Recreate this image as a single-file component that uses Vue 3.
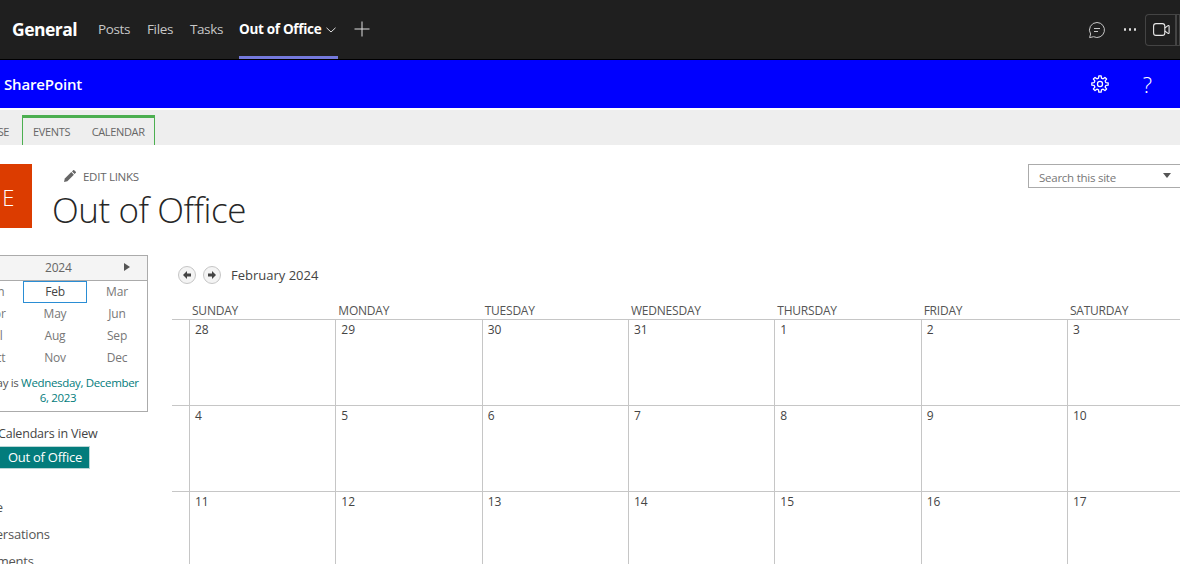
<script setup>
const months = ['Jan','Feb','Mar','Apr','May','Jun','Jul','Aug','Sep','Oct','Nov','Dec']
const dayNames = ['Sunday','Monday','Tuesday','Wednesday','Thursday','Friday','Saturday']
const weeks = [
  [28,29,30,31,1,2,3],
  [4,5,6,7,8,9,10],
  [11,12,13,14,15,16,17],
]
const tabs = ['Posts','Files','Tasks']
const gear = (() => {
  const pts = []
  const n = 8
  for (let i = 0; i < n; i++) {
    const a = (i / n) * Math.PI * 2
    const w = Math.PI / n
    const p = (r, t) => `${(12 + r * Math.cos(t)).toFixed(2)} ${(12 + r * Math.sin(t)).toFixed(2)}`
    pts.push(p(8, a - w * 0.62), p(11, a - w * 0.36), p(11, a + w * 0.36), p(8, a + w * 0.62))
  }
  return 'M' + pts.join('L') + 'Z'
})()
</script>

<template>
  <div class="page">
    <header class="teams">
      <span class="channel">General</span>
      <nav class="teams-tabs">
        <span v-for="t in tabs" :key="t" class="ttab">{{ t }}</span>
        <span class="ttab active">
          Out of Office
          <svg class="chev" width="10" height="6" viewBox="0 0 10 6"><path d="M.5.8 5 5 9.500.8" fill="none" stroke="#ddd" stroke-width="1"/></svg>
        </span>
        <svg class="plus" width="16" height="16" viewBox="0 0 16 16"><path d="M8 .5v15M.5 8h15" stroke="#e0e0e0" stroke-width="1" fill="none"/></svg>
      </nav>
      <div class="teams-right">
        <svg class="chat" width="18" height="18" viewBox="0 0 18 18" fill="none" stroke="#c8c8c8" stroke-width="1"><path d="M9 1.500a7.500 7.500 0 1 1-3.400 14.200L1.600 16.600l1-3.600A7.500 7.500 0 0 1 9 1.500Z"/><path d="M6 7.500h6M6 10.500h4"/></svg>
        <span class="dots"><i></i><i></i><i></i></span>
        <div class="video">
          <svg width="17" height="13" viewBox="0 0 17 13" fill="none" stroke="#e8e8e8" stroke-width="1.100"><rect x=".6" y=".6" width="11.200" height="11.800" rx="2.400"/><path d="M11.800 5 15 2.600a.7.7 0 0 1 1.100.6v6.600a.7.7 0 0 1-1.100.6L11.800 8"/></svg>
        </div>
        <div class="video-more"></div>
      </div>
    </header>

    <div class="suite">
      <span class="brand">SharePoint</span>
      <svg class="gear" width="18" height="18" viewBox="0 0 24 24" fill="none" stroke="#fff" stroke-width="1.700"><path :d="gear" stroke-linejoin="round"/><circle cx="12" cy="12" r="3.400"/></svg>
      <span class="help">?</span>
    </div>

    <div class="ribbon">
      <span class="rib-old">HOUSE</span>
      <div class="rib-group">
        <span>EVENTS</span>
        <span>CALENDAR</span>
      </div>
    </div>

    <div class="site-head">
      <div class="logo">OE</div>
      <div class="title-col">
        <div class="edit">
          <svg width="12" height="12" viewBox="0 0 12 12"><path d="M0 12l.8-3.400 6.500-6.500 2.600 2.600-6.500 6.500Z" fill="#666"/><path d="M8 1.400 9.200.2a.7.7 0 0 1 1 0l1.600 1.600a.7.7 0 0 1 0 1L10.600 4Z" fill="#666"/></svg>
          <span>EDIT LINKS</span>
        </div>
        <h1>Out of Office</h1>
      </div>
      <div class="search">
        <span>Search this site</span>
        <i class="caret"></i>
      </div>
    </div>

    <main class="main">
      <aside class="side">
        <div class="picker">
          <div class="picker-head">
            <span class="year">2024</span>
            <i class="next"></i>
          </div>
          <div class="months">
            <span v-for="m in months" :key="m" class="month" :class="{ sel: m === 'Feb' }">{{ m }}</span>
          </div>
          <p class="today">Today is <span class="teal">Wednesday, December<br>6, 2023</span></p>
        </div>
        <div class="legend">
          <div class="legend-title">Calendars in View</div>
          <div class="chip">Out of Office</div>
        </div>
        <ul class="quick">
          <li>Home</li>
          <li>Conversations</li>
          <li>Documents</li>
        </ul>
      </aside>

      <section class="cal">
        <div class="cal-nav">
          <span class="round"><svg width="10" height="10" viewBox="0 0 10 10"><path d="M5 1 1 5l4 4V6.500h4v-3H5Z" fill="#444"/></svg></span>
          <span class="round"><svg width="10" height="10" viewBox="0 0 10 10"><path d="M5 1l4 4-4 4V6.500H1v-3h4Z" fill="#444"/></svg></span>
          <span class="cal-title">February 2024</span>
        </div>
        <div class="grid">
          <span class="corner"></span>
          <span v-for="d in dayNames" :key="d" class="dname">{{ d }}</span>
          <template v-for="(w, i) in weeks" :key="i">
            <span class="gutter"></span>
            <div v-for="n in w" :key="n" class="cell">{{ n }}</div>
          </template>
        </div>
      </section>
    </main>
  </div>
</template>

<style>
html, body { margin: 0; background: #fff; overflow: hidden; }
</style>

<style scoped>
.page {
  width: 1180px;
  height: 564px;
  overflow: hidden;
  font-family: "Open Sans", "Noto Sans", sans-serif;
  color: #444;
  background: #fff;
}

/* Teams bar */
.teams {
  display: flex;
  align-items: center;
  height: 59px;
  border-bottom: 1px solid #000;
  background: #1f1f1f;
  padding-left: 12px;
}
.channel {
  font-size: 17.500px;
  font-weight: 700;
  color: #fff;
  letter-spacing: -0.5px;
  width: 86px;
  margin-top: -2px;
}
.teams-tabs {
  display: flex;
  align-items: center;
  height: 100%;
  gap: 17px;
}
.ttab {
  display: flex;
  align-items: center;
  height: 100%;
  font-size: 13.500px;
  letter-spacing: -0.38px;
  color: #c8c8c8;
  box-sizing: border-box;
  padding-bottom: 1px;
}
.ttab.active {
  width: 99px;
  margin-left: -1px;
  font-weight: 700;
  color: #fff;
  border-bottom: 3px solid #7479dc;
  white-space: nowrap;
  gap: 5px;
  letter-spacing: -0.3px;
  padding: 2px 0 0;
}
.chev { flex: none; margin-top: 1px; }
.plus { margin-top: -2px; margin-left: -1px; }
.teams-right {
  margin-left: auto;
  display: flex;
  align-items: center;
}
.chat { margin-right: 1px; }
.dots {
  display: flex;
  gap: 2.500px;
  margin-left: 17px;
}
.dots i {
  width: 2.500px;
  height: 2.500px;
  border-radius: 50%;
  background: #ddd;
}
.video {
  margin-left: 9px;
  width: 32px;
  height: 32px;
  border: 1px solid #444;
  border-right: 2px solid #444;
  border-radius: 4px 0 0 4px;
  display: flex;
  align-items: center;
  padding-left: 7px;
  box-sizing: border-box;
}
.video-more {
  width: 3px;
  height: 32px;
  border: 1px solid #444;
  border-left: 0;
  box-sizing: border-box;
}

/* Suite bar */
.suite {
  display: flex;
  align-items: center;
  height: 48px;
  background: #00f;
  color: #fff;
  padding-left: 4px;
}
.brand {
  font-size: 15px;
  font-weight: 600;
  letter-spacing: -0.15px;
}
.gear { margin-left: auto; }
.help {
  font-size: 22px;
  margin: 0 28px 0 34px;
  font-weight: 300;
}

/* Ribbon */
.ribbon {
  margin-top: 2px;
  height: 35px;
  background: #eee;
  display: flex;
  align-items: flex-end;
  font-size: 11px;
  color: #666;
  letter-spacing: -0.35px;
}
.rib-old {
  margin-left: -26px;
  margin-right: 13px;
  height: 27px;
  line-height: 27px;
}
.rib-group {
  height: 30px;
  box-sizing: border-box;
  width: 133px;
  border: 1px solid #4caf50;
  border-top-width: 3px;
  border-bottom: 0;
  display: flex;
  gap: 21.500px;
  padding-left: 10px;
  line-height: 27px;
}

/* Site header */
.site-head {
  display: flex;
  padding-top: 19px;
}
.logo {
  flex: none;
  width: 64px;
  height: 64px;
  margin-left: -32px;
  background: #dc3c00;
  color: #fff;
  font-size: 22px;
  letter-spacing: 3px;
  line-height: 66px;
  text-align: center;
  font-weight: 300;
}
.title-col { margin-left: 21px; }
.edit {
  display: flex;
  align-items: center;
  gap: 7px;
  padding-left: 11px;
  height: 24px;
  font-size: 11.500px;
  letter-spacing: -0.27px;
  color: #666;
}
h1 {
  margin: -1px 0 0 -1px;
  font-size: 35px;
  line-height: 46px;
  font-weight: 300;
  color: #262626;
  letter-spacing: -0.45px;
}
.search {
  margin-left: auto;
  margin-right: -20px;
  width: 172px;
  height: 24px;
  box-sizing: border-box;
  border: 1px solid #ababab;
  display: flex;
  align-items: center;
  padding: 2px 0 0 10px;
  font-size: 11.500px;
  letter-spacing: -0.25px;
  color: #777;
}
.caret {
  margin-left: 47px;
  margin-top: -3px;
  border: 4.500px solid transparent;
  border-top: 5px solid #555;
  border-bottom: 0;
}

/* Main */
.main {
  display: flex;
  margin-top: 22px;
}
.side {
  flex: none;
  width: 188px;
  margin-left: -40px;
}
.picker {
  border: 1px solid #ababab;
  height: 157px;
  box-sizing: border-box;
}
.picker-head {
  height: 24px;
  background: #f4f4f4;
  border-bottom: 1px solid #ababab;
  display: flex;
  align-items: center;
  font-size: 12px;
  color: #666;
}
.year { margin: -2px 0 0 84px; letter-spacing: -0.2px; }
.next {
  margin-left: 52px;
  margin-top: -3px;
  border: 4px solid transparent;
  border-left: 6px solid #555;
  border-right: 0;
}
.months {
  display: grid;
  grid-template-columns: 62px 64px 60px;
  grid-auto-rows: 22px;
  text-align: center;
  font-size: 12px;
  letter-spacing: -0.2px;
  color: #777;
}
.month {
  line-height: 21px;
  box-sizing: border-box;
}
.month:nth-child(3n+1) { padding-left: 8px; }
.month.sel {
  border: 1px solid #2a8dd4;
  line-height: 19px;
  color: #444;
}
.today {
  margin: 6px 0 0;
  padding-left: 8px;
  font-size: 11.500px;
  line-height: 15px;
  text-align: center;
  white-space: nowrap;
  letter-spacing: -0.33px;
  color: #555;
}
.teal { color: #037c7c; }
.legend { margin-top: 13px; padding-left: 38px; }
.legend-title {
  font-size: 12.500px;
  letter-spacing: -0.2px;
  line-height: 18px;
  color: #444;
}
.chip {
  margin-top: 3px;
  margin-left: -20px;
  width: 112px;
  height: 23px;
  box-sizing: border-box;
  border: 1px solid #b9d6d6;
  background: #037c7c;
  color: #fff;
  font-size: 13px;
  letter-spacing: -0.25px;
  line-height: 21px;
  text-align: right;
  padding-right: 7px;
}
.quick {
  list-style: none;
  margin: 25px 0 0;
  padding: 0;
  font-size: 13px;
  letter-spacing: -0.2px;
  color: #555;
}
.quick li { height: 27px; line-height: 27px; }
.quick li:nth-child(1) { padding-left: 7px; }
.quick li:nth-child(2) { padding-left: 6px; }
.quick li:nth-child(3) { padding-left: 6px; }

.cal {
  margin-left: 24px;
  flex: none;
}
.cal-nav {
  display: flex;
  align-items: center;
  gap: 7px;
  padding-left: 6px;
  margin-top: 11px;
  height: 18px;
}
.round {
  width: 18px;
  height: 18px;
  box-sizing: border-box;
  border: 1px solid #c6c6c6;
  border-radius: 50%;
  background: #f4f4f4;
  display: flex;
  align-items: center;
  justify-content: center;
}
.cal-title {
  margin-left: 3px;
  font-size: 13px;
  letter-spacing: 0;
  color: #444;
}
.grid {
  display: grid;
  grid-template-columns: 17px repeat(7, 146.330px);
  grid-auto-rows: 86px;
  grid-template-rows: 19px;
  margin-top: 16px;
}
.dname {
  font-size: 12px;
  text-transform: uppercase;
  letter-spacing: -0.22px;
  padding-left: 3px;
  line-height: 21px;
  color: #555;
}
.gutter { border-top: 1px solid #c6c6c6; }
.cell {
  border-top: 1px solid #c6c6c6;
  border-left: 1px solid #c6c6c6;
  padding: 1px 0 0 5px;
  font-size: 12px;
  line-height: 17px;
  color: #444;
}
</style>
